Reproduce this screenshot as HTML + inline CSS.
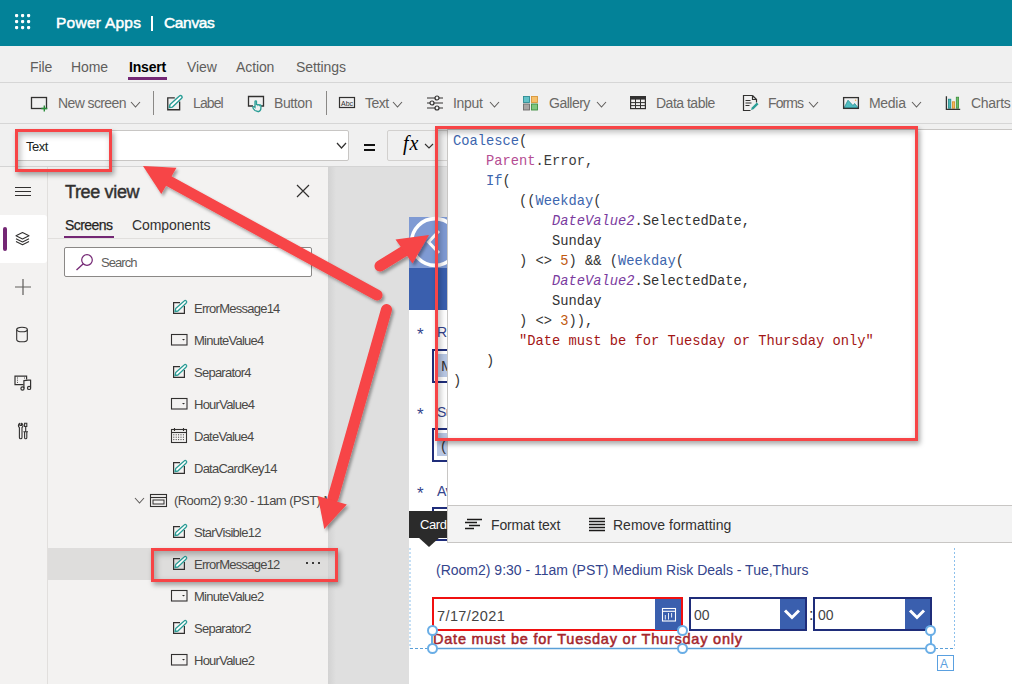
<!DOCTYPE html>
<html><head><meta charset="utf-8"><style>
html,body{margin:0;padding:0;width:1012px;height:684px;overflow:hidden;background:#f3f2f1;position:relative}
.t{position:absolute;white-space:pre;font-family:'Liberation Sans', sans-serif}
svg{overflow:visible}
</style></head><body>
<div style="position:absolute;left:0px;top:0px;width:1012px;height:46px;background:#038298"></div><div style="position:absolute;left:0px;top:46px;width:1012px;height:77px;background:#f0f0f0"></div><div style="position:absolute;left:0px;top:82px;width:1012px;height:1px;background:#d6d6d6"></div><div style="position:absolute;left:0px;top:123px;width:1012px;height:1px;background:#d6d6d6"></div><div style="position:absolute;left:0px;top:124px;width:1012px;height:42px;background:#f0f0f0"></div><svg style="position:absolute;left:0px;top:0px;" width="40" height="40" viewBox="0 0 40 40"><rect x="15" y="14" width="3.2" height="3.2" rx="1.1" fill="#fff"/><rect x="15" y="20" width="3.2" height="3.2" rx="1.1" fill="#fff"/><rect x="15" y="26" width="3.2" height="3.2" rx="1.1" fill="#fff"/><rect x="21" y="14" width="3.2" height="3.2" rx="1.1" fill="#fff"/><rect x="21" y="20" width="3.2" height="3.2" rx="1.1" fill="#fff"/><rect x="21" y="26" width="3.2" height="3.2" rx="1.1" fill="#fff"/><rect x="27" y="14" width="3.2" height="3.2" rx="1.1" fill="#fff"/><rect x="27" y="20" width="3.2" height="3.2" rx="1.1" fill="#fff"/><rect x="27" y="26" width="3.2" height="3.2" rx="1.1" fill="#fff"/></svg><div class="t" style="left:56px;top:14.88px;font-size:15.5px;line-height:15.5px;color:#fff;font-weight:400;font-family:'Liberation Sans', sans-serif;letter-spacing:0.25px;-webkit-text-stroke:0.5px #fff">Power Apps</div><div style="position:absolute;left:151px;top:16px;width:2px;height:15px;background:#fff"></div><div class="t" style="left:164px;top:14.88px;font-size:15.5px;line-height:15.5px;color:#fff;font-weight:400;font-family:'Liberation Sans', sans-serif;letter-spacing:-0.35px;-webkit-text-stroke:0.5px #fff">Canvas</div><div class="t" style="left:30px;top:60.15px;font-size:14px;line-height:14px;color:#605e5c;font-weight:400;font-family:'Liberation Sans', sans-serif;letter-spacing:-0.1px;">File</div><div class="t" style="left:71px;top:60.15px;font-size:14px;line-height:14px;color:#605e5c;font-weight:400;font-family:'Liberation Sans', sans-serif;letter-spacing:-0.1px;">Home</div><div class="t" style="left:129px;top:60.15px;font-size:14px;line-height:14px;color:#000;font-weight:700;font-family:'Liberation Sans', sans-serif;letter-spacing:-0.2px;">Insert</div><div class="t" style="left:187px;top:60.15px;font-size:14px;line-height:14px;color:#605e5c;font-weight:400;font-family:'Liberation Sans', sans-serif;letter-spacing:-0.1px;">View</div><div class="t" style="left:236px;top:60.15px;font-size:14px;line-height:14px;color:#605e5c;font-weight:400;font-family:'Liberation Sans', sans-serif;letter-spacing:-0.1px;">Action</div><div class="t" style="left:296px;top:60.15px;font-size:14px;line-height:14px;color:#605e5c;font-weight:400;font-family:'Liberation Sans', sans-serif;letter-spacing:-0.1px;">Settings</div><div style="position:absolute;left:128px;top:77px;width:39px;height:3px;background:#742774"></div><svg style="position:absolute;left:30px;top:96px;" width="20" height="16" viewBox="0 0 20 16"><rect x="1.5" y="1.5" width="15" height="11" fill="none" stroke="#323130" stroke-width="1.3"/><path d="M14.3 9.5v6M11.3 12.5h6" stroke="#2a8f3a" stroke-width="1.4"/></svg><div class="t" style="left:58px;top:95.65px;font-size:14px;line-height:14px;color:#6a6866;font-weight:400;font-family:'Liberation Sans', sans-serif;letter-spacing:-0.6px;">New screen</div><svg style="position:absolute;left:130px;top:101px;" width="11" height="7" viewBox="0 0 11 7"><polyline points="1,1 5.5,6 10,1" fill="none" stroke="#605e5c" stroke-width="1.1"/></svg><div style="position:absolute;left:153px;top:91px;width:1px;height:24px;background:#8a8886"></div><svg style="position:absolute;left:166px;top:94.5px;" width="18" height="18" viewBox="0 0 18 18"><g transform="scale(1.1)"><path d="M8 2.6H1.6V13.4H12.4V6" fill="none" stroke="#323130" stroke-width="1.2"/><path d="M3 11.5L3.7 8.6L12.2 0.9A1.2 1.2 0 0 1 14.2 3L5.9 11Z" fill="#fff" stroke="#2a9d96" stroke-width="1.3" stroke-linejoin="round"/></g></svg><div class="t" style="left:193px;top:95.65px;font-size:14px;line-height:14px;color:#6a6866;font-weight:400;font-family:'Liberation Sans', sans-serif;letter-spacing:-0.9px;">Label</div><svg style="position:absolute;left:247px;top:95px;" width="20" height="18" viewBox="0 0 20 18"><path d="M6 11H1.5V1.5h15V11H14" fill="none" stroke="#323130" stroke-width="1.3"/><path d="M8 15.5c-1.5-1.2-2.5-2.5-2-3.5.5-.7 1.4-.3 2 .3V6.5c0-.8 1.5-.8 1.5 0V10c.3-.6 1.3-.6 1.5 0 .3-.5 1.3-.5 1.5.2.3-.4 1.4-.3 1.4.5v2.5c0 1.5-1 3-2.5 3.5z" fill="none" stroke="#2a9d96" stroke-width="1.3"/></svg><div class="t" style="left:274px;top:95.65px;font-size:14px;line-height:14px;color:#6a6866;font-weight:400;font-family:'Liberation Sans', sans-serif;letter-spacing:-0.4px;">Button</div><div style="position:absolute;left:326px;top:91px;width:1px;height:24px;background:#8a8886"></div><svg style="position:absolute;left:338px;top:96px;" width="18" height="14" viewBox="0 0 18 14"><rect x="1.5" y="1.5" width="15" height="10" fill="none" stroke="#323130" stroke-width="1.2"/><text x="9" y="9.5" font-size="7" font-family="Liberation Sans" text-anchor="middle" fill="#323130">Abc</text></svg><div class="t" style="left:365px;top:95.65px;font-size:14px;line-height:14px;color:#6a6866;font-weight:400;font-family:'Liberation Sans', sans-serif;letter-spacing:-0.5px;">Text</div><svg style="position:absolute;left:392px;top:101px;" width="11" height="7" viewBox="0 0 11 7"><polyline points="1,1 5.5,6 10,1" fill="none" stroke="#605e5c" stroke-width="1.1"/></svg><svg style="position:absolute;left:426px;top:95px;" width="18" height="16" viewBox="0 0 18 16"><path d="M1 3h16M1 8h16M1 13h16" stroke="#323130" stroke-width="1.2"/><circle cx="11" cy="3" r="2" fill="#f0f0f0" stroke="#323130" stroke-width="1.2"/><circle cx="6" cy="8" r="2" fill="#f0f0f0" stroke="#323130" stroke-width="1.2"/><circle cx="11" cy="13" r="2" fill="#f0f0f0" stroke="#323130" stroke-width="1.2"/></svg><div class="t" style="left:453px;top:95.65px;font-size:14px;line-height:14px;color:#6a6866;font-weight:400;font-family:'Liberation Sans', sans-serif;letter-spacing:-0.3px;">Input</div><svg style="position:absolute;left:489px;top:101px;" width="11" height="7" viewBox="0 0 11 7"><polyline points="1,1 5.5,6 10,1" fill="none" stroke="#605e5c" stroke-width="1.1"/></svg><svg style="position:absolute;left:522px;top:95px;" width="18" height="16" viewBox="0 0 18 16"><rect x="1.5" y="1.5" width="6" height="6" fill="#62c2c8" stroke="#2f8c92" stroke-width="0.9"/><rect x="9.5" y="1.5" width="6" height="6" fill="#f7c06a" stroke="#d8953a" stroke-width="0.9"/><rect x="1.5" y="9" width="6" height="6" fill="#a8a6a4" stroke="#6e6c6a" stroke-width="0.9"/><rect x="9.5" y="9" width="6" height="6" fill="#80c67e" stroke="#3f8f3f" stroke-width="0.9"/></svg><div class="t" style="left:549px;top:95.65px;font-size:14px;line-height:14px;color:#6a6866;font-weight:400;font-family:'Liberation Sans', sans-serif;letter-spacing:-0.5px;">Gallery</div><svg style="position:absolute;left:596px;top:101px;" width="11" height="7" viewBox="0 0 11 7"><polyline points="1,1 5.5,6 10,1" fill="none" stroke="#605e5c" stroke-width="1.1"/></svg><svg style="position:absolute;left:629px;top:95px;" width="18" height="16" viewBox="0 0 18 16"><rect x="1.6" y="1.6" width="14.8" height="12" fill="none" stroke="#323130" stroke-width="1.2"/><rect x="1" y="1" width="16" height="3.6" fill="#323130"/><path d="M1.5 7.6h15M1.5 10.6h15M6.5 4v9.5M11.5 4v9.5" stroke="#323130" stroke-width="1"/></svg><div class="t" style="left:656px;top:95.65px;font-size:14px;line-height:14px;color:#6a6866;font-weight:400;font-family:'Liberation Sans', sans-serif;letter-spacing:-0.5px;">Data table</div><svg style="position:absolute;left:741px;top:94px;" width="18" height="18" viewBox="0 0 18 18"><path d="M11.5 1.5H2.5v15h7M11.5 1.5v4h4v3M11.5 1.5l4 4" fill="none" stroke="#323130" stroke-width="1.2"/><path d="M4.5 6.5h5M4.5 9h6M4.5 11.5h4" stroke="#323130" stroke-width="1"/><path d="M10 16l.8-2.5 5-5 1.7 1.7-5 5z" fill="#2a9d96"/></svg><div class="t" style="left:768px;top:95.65px;font-size:14px;line-height:14px;color:#6a6866;font-weight:400;font-family:'Liberation Sans', sans-serif;letter-spacing:-0.9px;">Forms</div><svg style="position:absolute;left:808px;top:101px;" width="11" height="7" viewBox="0 0 11 7"><polyline points="1,1 5.5,6 10,1" fill="none" stroke="#605e5c" stroke-width="1.1"/></svg><svg style="position:absolute;left:842px;top:96px;" width="19" height="14" viewBox="0 0 19 14"><path d="M2 12L6 4.2L11 9.6L12.6 7.5L16.3 12Z" fill="#4fbcc0" stroke="#2a8d92" stroke-width="0.8"/><rect x="1.6" y="1.6" width="14.8" height="10.8" fill="none" stroke="#323130" stroke-width="1.3"/><circle cx="13.6" cy="4.3" r="0.7" fill="#f2a93b"/></svg><div class="t" style="left:869px;top:95.65px;font-size:14px;line-height:14px;color:#6a6866;font-weight:400;font-family:'Liberation Sans', sans-serif;letter-spacing:-0.3px;">Media</div><svg style="position:absolute;left:911px;top:101px;" width="11" height="7" viewBox="0 0 11 7"><polyline points="1,1 5.5,6 10,1" fill="none" stroke="#605e5c" stroke-width="1.1"/></svg><svg style="position:absolute;left:945px;top:95px;" width="17" height="16" viewBox="0 0 17 16"><rect x="3.5" y="4.2" width="2.3" height="9" fill="#4bb5b5" stroke="#1d8a8a" stroke-width="0.8"/><rect x="7.4" y="6.8" width="2.2" height="6.4" fill="#f5b95c" stroke="#d58d2b" stroke-width="0.8"/><rect x="11.3" y="2.2" width="2.3" height="11" fill="#6cbf68" stroke="#3c8f3c" stroke-width="0.8"/><path d="M1.4 1.3V14.3H15.2" fill="none" stroke="#323130" stroke-width="1.3"/></svg><div class="t" style="left:971px;top:95.65px;font-size:14px;line-height:14px;color:#6a6866;font-weight:400;font-family:'Liberation Sans', sans-serif;letter-spacing:-0.3px;">Charts</div><div style="position:absolute;left:16px;top:130px;width:333px;height:31px;background:#fff;border:1px solid #c8c6c4;box-sizing:border-box;border-radius:2px"></div><div class="t" style="left:26px;top:140.00px;font-size:13px;line-height:13px;color:#201f1e;font-weight:400;font-family:'Liberation Sans', sans-serif;letter-spacing:-0.5px;">Text</div><svg style="position:absolute;left:336px;top:142px;" width="11" height="7" viewBox="0 0 11 7"><polyline points="1,1 5.5,6 10,1" fill="none" stroke="#323130" stroke-width="1.2"/></svg><div style="position:absolute;left:364px;top:144px;width:11px;height:1.6px;background:#111"></div><div style="position:absolute;left:364px;top:149px;width:11px;height:1.6px;background:#111"></div><div style="position:absolute;left:387px;top:130px;width:70px;height:31px;background:#f0f0f0;border:1px solid #d2d0ce;box-sizing:border-box;border-radius:2px"></div><div class="t" style="left:403px;top:133.17px;font-size:20px;line-height:20px;color:#000;font-weight:400;font-family:'Liberation Serif', serif;letter-spacing:1px;font-style:italic">fx</div><svg style="position:absolute;left:424px;top:143px;" width="10" height="6" viewBox="0 0 10 6"><polyline points="1,1 5.0,5 9,1" fill="none" stroke="#323130" stroke-width="1.1"/></svg><div style="position:absolute;left:0px;top:166px;width:47px;height:518px;background:#f3f2f1"></div><div style="position:absolute;left:47px;top:166px;width:1px;height:518px;background:#e1dfdd"></div><div style="position:absolute;left:15px;top:187px;width:16px;height:1.2px;background:#323130"></div><div style="position:absolute;left:15px;top:191px;width:16px;height:1.2px;background:#323130"></div><div style="position:absolute;left:15px;top:195px;width:16px;height:1.2px;background:#323130"></div><div style="position:absolute;left:0px;top:215px;width:47px;height:48px;background:#fff;border-radius:0 3px 3px 0"></div><div style="position:absolute;left:3px;top:227px;width:4px;height:24px;background:#742774;border-radius:2px"></div><svg style="position:absolute;left:14px;top:231px;" width="18" height="16" viewBox="0 0 18 16"><path d="M8.5 1.5l6.5 3.2-6.5 3.2-6.5-3.2z M2 7.8l6.5 3.2 6.5-3.2 M2 10.6l6.5 3.2 6.5-3.2" fill="none" stroke="#323130" stroke-width="1.1" stroke-linejoin="round"/></svg><svg style="position:absolute;left:14px;top:278px;" width="18" height="18" viewBox="0 0 18 18"><path d="M9 1v16M1 9h16" stroke="#605e5c" stroke-width="1.2"/></svg><svg style="position:absolute;left:15px;top:326px;" width="14" height="17" viewBox="0 0 14 17"><ellipse cx="7" cy="3.5" rx="5.3" ry="2.3" fill="none" stroke="#323130" stroke-width="1.1"/><path d="M1.7 3.5v10c0 1.3 2.4 2.3 5.3 2.3s5.3-1 5.3-2.3v-10" fill="none" stroke="#323130" stroke-width="1.1"/></svg><svg style="position:absolute;left:13px;top:374px;" width="20" height="18" viewBox="0 0 20 18"><path d="M10.5 10.7H2V2.1H13.6V5.5" fill="none" stroke="#323130" stroke-width="1.2"/><path d="M4.5 3.5v6M11.5 3.5v2" stroke="#323130" stroke-width="0.9" stroke-dasharray="1 1.2"/><path d="M10.9 14.2V6.6Q14 5.8 17.6 6.2V13.6" fill="none" stroke="#323130" stroke-width="1.2"/><circle cx="9.5" cy="14.5" r="1.6" fill="none" stroke="#323130" stroke-width="1.2"/><circle cx="16.1" cy="13.9" r="1.6" fill="none" stroke="#323130" stroke-width="1.2"/></svg><svg style="position:absolute;left:16px;top:421px;" width="14" height="19" viewBox="0 0 14 19"><path d="M3.4 6.5V16.4A1.3 1.3 0 0 0 6 16.4V6.5A2.3 2.3 0 0 0 7 4.5A2.5 2.5 0 0 0 5.5 2.3V4.5H3.9V2.3A2.5 2.5 0 0 0 2.4 4.5A2.3 2.3 0 0 0 3.4 6.5Z" fill="none" stroke="#323130" stroke-width="1.1" stroke-linejoin="round"/><path d="M8.6 2.3h2.2v3.2h-2.2z M9.7 5.5v5.2 M7.4 10.7h4.6 M8.6 10.7v6A1.1 1.1 0 0 0 10.8 16.7v-6" fill="none" stroke="#323130" stroke-width="1.1"/></svg><div style="position:absolute;left:48px;top:166px;width:280px;height:518px;background:#f3f2f1"></div><div class="t" style="left:65px;top:182.76px;font-size:18px;line-height:18px;color:#323130;font-weight:400;font-family:'Liberation Sans', sans-serif;letter-spacing:-0.35px;-webkit-text-stroke:0.45px #323130">Tree view</div><svg style="position:absolute;left:296px;top:184px;" width="14" height="14" viewBox="0 0 14 14"><path d="M1 1l12 12M13 1L1 13" stroke="#323130" stroke-width="1.2"/></svg><div class="t" style="left:65px;top:218.15px;font-size:14px;line-height:14px;color:#252423;font-weight:400;font-family:'Liberation Sans', sans-serif;letter-spacing:-0.55px;-webkit-text-stroke:0.25px #252423">Screens</div><div class="t" style="left:132px;top:218.15px;font-size:14px;line-height:14px;color:#323130;font-weight:400;font-family:'Liberation Sans', sans-serif;letter-spacing:-0.1px;">Components</div><div style="position:absolute;left:64px;top:236px;width:50px;height:2px;background:#742774"></div><div style="position:absolute;left:48px;top:238px;width:280px;height:1px;background:#e1dfdd"></div><div style="position:absolute;left:64px;top:247px;width:248px;height:30px;background:#fff;border:1px solid #8a8886;box-sizing:border-box;border-radius:2px"></div><svg style="position:absolute;left:75px;top:253px;" width="20" height="18" viewBox="0 0 20 18"><circle cx="12" cy="7" r="5.3" fill="none" stroke="#742774" stroke-width="1.2"/><path d="M8.3 10.7L1.5 17" stroke="#742774" stroke-width="1.3"/></svg><div class="t" style="left:101px;top:256.00px;font-size:13px;line-height:13px;color:#605e5c;font-weight:400;font-family:'Liberation Sans', sans-serif;letter-spacing:-0.95px;">Search</div><div style="position:absolute;left:48px;top:548px;width:280px;height:32px;background:#dedddc"></div><svg style="position:absolute;left:172px;top:299.5px;" width="16" height="16" viewBox="0 0 16 16"><path d="M8 2.6H1.6V13.4H12.4V6" fill="none" stroke="#323130" stroke-width="1.2"/><path d="M3 11.5L3.7 8.6L12.2 0.9A1.2 1.2 0 0 1 14.2 3L5.9 11Z" fill="#fff" stroke="#2a9d96" stroke-width="1.3" stroke-linejoin="round"/></svg><div class="t" style="left:194px;top:302.00px;font-size:13px;line-height:13px;color:#4a4947;font-weight:400;font-family:'Liberation Sans', sans-serif;letter-spacing:-0.75px;">ErrorMessage14</div><svg style="position:absolute;left:171px;top:334px;" width="18" height="13" viewBox="0 0 18 13"><rect x="0.5" y="0.5" width="15.5" height="10.5" fill="none" stroke="#323130" stroke-width="1.1"/><path d="M11 5h3l-1.5 1.6z" fill="#323130"/></svg><div class="t" style="left:194px;top:334.00px;font-size:13px;line-height:13px;color:#4a4947;font-weight:400;font-family:'Liberation Sans', sans-serif;letter-spacing:-0.75px;">MinuteValue4</div><svg style="position:absolute;left:172px;top:363.5px;" width="16" height="16" viewBox="0 0 16 16"><path d="M8 2.6H1.6V13.4H12.4V6" fill="none" stroke="#323130" stroke-width="1.2"/><path d="M3 11.5L3.7 8.6L12.2 0.9A1.2 1.2 0 0 1 14.2 3L5.9 11Z" fill="#fff" stroke="#2a9d96" stroke-width="1.3" stroke-linejoin="round"/></svg><div class="t" style="left:194px;top:366.00px;font-size:13px;line-height:13px;color:#4a4947;font-weight:400;font-family:'Liberation Sans', sans-serif;letter-spacing:-0.75px;">Separator4</div><svg style="position:absolute;left:171px;top:398px;" width="18" height="13" viewBox="0 0 18 13"><rect x="0.5" y="0.5" width="15.5" height="10.5" fill="none" stroke="#323130" stroke-width="1.1"/><path d="M11 5h3l-1.5 1.6z" fill="#323130"/></svg><div class="t" style="left:194px;top:398.00px;font-size:13px;line-height:13px;color:#4a4947;font-weight:400;font-family:'Liberation Sans', sans-serif;letter-spacing:-0.75px;">HourValue4</div><svg style="position:absolute;left:171px;top:428px;" width="17" height="16" viewBox="0 0 17 16"><rect x="0.5" y="1.5" width="15" height="13" fill="none" stroke="#323130" stroke-width="1.1"/><path d="M0.5 4.5h15" stroke="#323130" stroke-width="1.1"/><path d="M3.5 0v3M12.5 0v3" stroke="#323130" stroke-width="1.1"/><rect x="2.3" y="6.3" width="1" height="1" fill="#323130"/><rect x="2.3" y="8.7" width="1" height="1" fill="#323130"/><rect x="2.3" y="11.1" width="1" height="1" fill="#323130"/><rect x="4.7" y="6.3" width="1" height="1" fill="#323130"/><rect x="4.7" y="8.7" width="1" height="1" fill="#323130"/><rect x="4.7" y="11.1" width="1" height="1" fill="#323130"/><rect x="7.1" y="6.3" width="1" height="1" fill="#323130"/><rect x="7.1" y="8.7" width="1" height="1" fill="#323130"/><rect x="7.1" y="11.1" width="1" height="1" fill="#323130"/><rect x="9.5" y="6.3" width="1" height="1" fill="#323130"/><rect x="9.5" y="8.7" width="1" height="1" fill="#323130"/><rect x="9.5" y="11.1" width="1" height="1" fill="#323130"/><rect x="11.9" y="6.3" width="1" height="1" fill="#323130"/><rect x="11.9" y="8.7" width="1" height="1" fill="#323130"/><rect x="11.9" y="11.1" width="1" height="1" fill="#323130"/></svg><div class="t" style="left:194px;top:430.00px;font-size:13px;line-height:13px;color:#4a4947;font-weight:400;font-family:'Liberation Sans', sans-serif;letter-spacing:-0.75px;">DateValue4</div><svg style="position:absolute;left:172px;top:459.5px;" width="16" height="16" viewBox="0 0 16 16"><path d="M8 2.6H1.6V13.4H12.4V6" fill="none" stroke="#323130" stroke-width="1.2"/><path d="M3 11.5L3.7 8.6L12.2 0.9A1.2 1.2 0 0 1 14.2 3L5.9 11Z" fill="#fff" stroke="#2a9d96" stroke-width="1.3" stroke-linejoin="round"/></svg><div class="t" style="left:194px;top:462.00px;font-size:13px;line-height:13px;color:#4a4947;font-weight:400;font-family:'Liberation Sans', sans-serif;letter-spacing:-0.75px;">DataCardKey14</div><svg style="position:absolute;left:172px;top:523.5px;" width="16" height="16" viewBox="0 0 16 16"><path d="M8 2.6H1.6V13.4H12.4V6" fill="none" stroke="#323130" stroke-width="1.2"/><path d="M3 11.5L3.7 8.6L12.2 0.9A1.2 1.2 0 0 1 14.2 3L5.9 11Z" fill="#fff" stroke="#2a9d96" stroke-width="1.3" stroke-linejoin="round"/></svg><div class="t" style="left:194px;top:526.00px;font-size:13px;line-height:13px;color:#4a4947;font-weight:400;font-family:'Liberation Sans', sans-serif;letter-spacing:-0.75px;">StarVisible12</div><svg style="position:absolute;left:172px;top:555.5px;" width="16" height="16" viewBox="0 0 16 16"><path d="M8 2.6H1.6V13.4H12.4V6" fill="none" stroke="#323130" stroke-width="1.2"/><path d="M3 11.5L3.7 8.6L12.2 0.9A1.2 1.2 0 0 1 14.2 3L5.9 11Z" fill="#fff" stroke="#2a9d96" stroke-width="1.3" stroke-linejoin="round"/></svg><div class="t" style="left:194px;top:558.00px;font-size:13px;line-height:13px;color:#4a4947;font-weight:400;font-family:'Liberation Sans', sans-serif;letter-spacing:-0.75px;">ErrorMessage12</div><svg style="position:absolute;left:171px;top:590px;" width="18" height="13" viewBox="0 0 18 13"><rect x="0.5" y="0.5" width="15.5" height="10.5" fill="none" stroke="#323130" stroke-width="1.1"/><path d="M11 5h3l-1.5 1.6z" fill="#323130"/></svg><div class="t" style="left:194px;top:590.00px;font-size:13px;line-height:13px;color:#4a4947;font-weight:400;font-family:'Liberation Sans', sans-serif;letter-spacing:-0.75px;">MinuteValue2</div><svg style="position:absolute;left:172px;top:619.5px;" width="16" height="16" viewBox="0 0 16 16"><path d="M8 2.6H1.6V13.4H12.4V6" fill="none" stroke="#323130" stroke-width="1.2"/><path d="M3 11.5L3.7 8.6L12.2 0.9A1.2 1.2 0 0 1 14.2 3L5.9 11Z" fill="#fff" stroke="#2a9d96" stroke-width="1.3" stroke-linejoin="round"/></svg><div class="t" style="left:194px;top:622.00px;font-size:13px;line-height:13px;color:#4a4947;font-weight:400;font-family:'Liberation Sans', sans-serif;letter-spacing:-0.75px;">Separator2</div><svg style="position:absolute;left:171px;top:654px;" width="18" height="13" viewBox="0 0 18 13"><rect x="0.5" y="0.5" width="15.5" height="10.5" fill="none" stroke="#323130" stroke-width="1.1"/><path d="M11 5h3l-1.5 1.6z" fill="#323130"/></svg><div class="t" style="left:194px;top:654.00px;font-size:13px;line-height:13px;color:#4a4947;font-weight:400;font-family:'Liberation Sans', sans-serif;letter-spacing:-0.75px;">HourValue2</div><svg style="position:absolute;left:134px;top:497px;" width="11" height="7" viewBox="0 0 11 7"><polyline points="1,1 5.5,6 10,1" fill="none" stroke="#605e5c" stroke-width="1.1"/></svg><svg style="position:absolute;left:150px;top:494px;" width="18" height="14" viewBox="0 0 18 14"><rect x="0.5" y="0.5" width="16" height="12" fill="none" stroke="#323130" stroke-width="1.1"/><path d="M0.5 3.5h16" stroke="#323130" stroke-width="1.1"/><rect x="3" y="6" width="11" height="4" fill="none" stroke="#323130" stroke-width="1"/></svg><div class="t" style="left:174px;top:494.00px;font-size:13px;line-height:13px;color:#4a4947;font-weight:400;font-family:'Liberation Sans', sans-serif;letter-spacing:-0.55px;">(Room2) 9:30 - 11am (PST) M</div><div style="position:absolute;left:306px;top:562px;width:2px;height:2px;background:#3b3a39"></div><div style="position:absolute;left:312px;top:562px;width:2px;height:2px;background:#3b3a39"></div><div style="position:absolute;left:318px;top:562px;width:2px;height:2px;background:#3b3a39"></div><div style="position:absolute;left:328px;top:166px;width:684px;height:518px;background:#dfdfdf"></div><div style="position:absolute;left:328px;top:166px;width:8px;height:518px;background:linear-gradient(to right,#d2d2d2,#dfdfdf)"></div><div style="position:absolute;left:409px;top:217px;width:603px;height:467px;background:#fff"></div><div style="position:absolute;left:409px;top:217px;width:603px;height:51px;background:#7f9ad3"></div><div style="position:absolute;left:409px;top:268px;width:603px;height:42px;background:#3a5fae"></div><svg style="position:absolute;left:408px;top:215px;" width="54" height="56" viewBox="0 0 54 56"><circle cx="27" cy="27" r="23.4" fill="none" stroke="#fff" stroke-width="3.6"/><polyline points="31,16 20.5,27 31,38" fill="none" stroke="#fff" stroke-width="3"/></svg><div class="t" style="left:417px;top:325.61px;font-size:17px;line-height:17px;color:#34448c;font-weight:400;font-family:'Liberation Sans', sans-serif;letter-spacing:0px;">*</div><div class="t" style="left:437px;top:325.15px;font-size:14px;line-height:14px;color:#34448c;font-weight:400;font-family:'Liberation Sans', sans-serif;letter-spacing:-0.6px;">Ri</div><div style="position:absolute;left:432px;top:349px;width:40px;height:34px;border:2px solid #1f2d7a;box-sizing:border-box;background:#fff"></div><div style="position:absolute;left:437px;top:354px;width:30px;height:23px;background:#b8c7e4"></div><div class="t" style="left:417px;top:405.61px;font-size:17px;line-height:17px;color:#34448c;font-weight:400;font-family:'Liberation Sans', sans-serif;letter-spacing:0px;">*</div><div class="t" style="left:437px;top:405.15px;font-size:14px;line-height:14px;color:#34448c;font-weight:400;font-family:'Liberation Sans', sans-serif;letter-spacing:-0.6px;">Su</div><div style="position:absolute;left:432px;top:428px;width:40px;height:34px;border:2px solid #1f2d7a;box-sizing:border-box;background:#fff"></div><div style="position:absolute;left:437px;top:433px;width:30px;height:23px;background:#b8c7e4"></div><div class="t" style="left:417px;top:484.61px;font-size:17px;line-height:17px;color:#34448c;font-weight:400;font-family:'Liberation Sans', sans-serif;letter-spacing:0px;">*</div><div class="t" style="left:437px;top:484.15px;font-size:14px;line-height:14px;color:#34448c;font-weight:400;font-family:'Liberation Sans', sans-serif;letter-spacing:-0.6px;">Av</div><div style="position:absolute;left:432px;top:507px;width:40px;height:34px;border:2px solid #1f2d7a;box-sizing:border-box;background:#fff"></div><div style="position:absolute;left:437px;top:512px;width:30px;height:23px;background:#b8c7e4"></div><div class="t" style="left:441px;top:358.30px;font-size:15px;line-height:15px;color:#333;font-weight:400;font-family:'Liberation Sans', sans-serif;letter-spacing:0px;">M</div><div class="t" style="left:441px;top:438.30px;font-size:15px;line-height:15px;color:#333;font-weight:400;font-family:'Liberation Sans', sans-serif;letter-spacing:0px;">(</div><div style="position:absolute;left:409px;top:511px;width:40px;height:27px;background:#2b2b2b"></div><svg style="position:absolute;left:418px;top:537px;" width="22" height="10" viewBox="0 0 22 10"><path d="M0 0h22L11 10z" fill="#2b2b2b"/></svg><div class="t" style="left:420px;top:518.00px;font-size:13px;line-height:13px;color:#fff;font-weight:400;font-family:'Liberation Sans', sans-serif;letter-spacing:-0.4px;">Card</div><div style="position:absolute;left:0px;top:166px;width:447px;height:1px;background:#d4d4d4"></div><div style="position:absolute;left:447px;top:129px;width:565px;height:376px;background:#fff;border-left:1px solid #c8c6c4;border-top:1px solid #c8c6c4;box-sizing:border-box"></div><div class="t" style="left:453px;top:135.46px;font-size:13.75px;line-height:13.75px;color:#3c3c3c;font-weight:400;font-family:'Liberation Mono', monospace;letter-spacing:0px;"><span style="color:#3d66ae">Coalesce</span><span style="color:#333">(</span></div><div class="t" style="left:486px;top:155.46px;font-size:13.75px;line-height:13.75px;color:#3c3c3c;font-weight:400;font-family:'Liberation Mono', monospace;letter-spacing:0px;"><span style="color:#b54d93">Parent</span><span style="color:#3c3c3c">.Error,</span></div><div class="t" style="left:486px;top:175.46px;font-size:13.75px;line-height:13.75px;color:#3c3c3c;font-weight:400;font-family:'Liberation Mono', monospace;letter-spacing:0px;"><span style="color:#3d66ae">If</span><span style="color:#333">(</span></div><div class="t" style="left:519px;top:195.46px;font-size:13.75px;line-height:13.75px;color:#3c3c3c;font-weight:400;font-family:'Liberation Mono', monospace;letter-spacing:0px;"><span style="color:#333">((</span><span style="color:#3d66ae">Weekday</span><span style="color:#333">(</span></div><div class="t" style="left:552px;top:215.46px;font-size:13.75px;line-height:13.75px;color:#3c3c3c;font-weight:400;font-family:'Liberation Mono', monospace;letter-spacing:0px;"><span style="color:#7a3a9e"><i>DateValue2</i></span><span style="color:#333">.SelectedDate,</span></div><div class="t" style="left:552px;top:235.46px;font-size:13.75px;line-height:13.75px;color:#3c3c3c;font-weight:400;font-family:'Liberation Mono', monospace;letter-spacing:0px;"><span style="color:#333">Sunday</span></div><div class="t" style="left:519px;top:255.46px;font-size:13.75px;line-height:13.75px;color:#3c3c3c;font-weight:400;font-family:'Liberation Mono', monospace;letter-spacing:0px;"><span style="color:#333">) &lt;&gt; </span><span style="color:#c0580e">5</span><span style="color:#333">) &amp;&amp; (</span><span style="color:#3d66ae">Weekday</span><span style="color:#333">(</span></div><div class="t" style="left:552px;top:275.46px;font-size:13.75px;line-height:13.75px;color:#3c3c3c;font-weight:400;font-family:'Liberation Mono', monospace;letter-spacing:0px;"><span style="color:#7a3a9e"><i>DateValue2</i></span><span style="color:#333">.SelectedDate,</span></div><div class="t" style="left:552px;top:295.46px;font-size:13.75px;line-height:13.75px;color:#3c3c3c;font-weight:400;font-family:'Liberation Mono', monospace;letter-spacing:0px;"><span style="color:#333">Sunday</span></div><div class="t" style="left:519px;top:315.46px;font-size:13.75px;line-height:13.75px;color:#3c3c3c;font-weight:400;font-family:'Liberation Mono', monospace;letter-spacing:0px;"><span style="color:#333">) &lt;&gt; </span><span style="color:#c0580e">3</span><span style="color:#333">)),</span></div><div class="t" style="left:519px;top:335.46px;font-size:13.75px;line-height:13.75px;color:#3c3c3c;font-weight:400;font-family:'Liberation Mono', monospace;letter-spacing:0px;"><span style="color:#a31515">"Date must be for Tuesday or Thursday only"</span></div><div class="t" style="left:486px;top:355.46px;font-size:13.75px;line-height:13.75px;color:#3c3c3c;font-weight:400;font-family:'Liberation Mono', monospace;letter-spacing:0px;"><span style="color:#333">)</span></div><div class="t" style="left:453px;top:375.46px;font-size:13.75px;line-height:13.75px;color:#3c3c3c;font-weight:400;font-family:'Liberation Mono', monospace;letter-spacing:0px;"><span style="color:#333">)</span></div><div style="position:absolute;left:447px;top:505px;width:565px;height:38px;background:#f3f3f3;border-top:1px solid #c8c6c4;border-bottom:1px solid #c8c6c4;border-left:1px solid #c8c6c4;box-sizing:border-box"></div><svg style="position:absolute;left:464px;top:518px;" width="20" height="13" viewBox="0 0 20 13"><path d="M3 1.5h15M1 4.5h12M5 7.5h11M1 10.5h9" stroke="#1b1a19" stroke-width="1.3"/></svg><div class="t" style="left:491px;top:517.65px;font-size:14px;line-height:14px;color:#323130;font-weight:400;font-family:'Liberation Sans', sans-serif;letter-spacing:-0.15px;">Format text</div><svg style="position:absolute;left:588px;top:517px;" width="18" height="15" viewBox="0 0 18 15"><path d="M1 1.5h16M1 4.5h16M1 7.5h16M1 10.5h16M1 13.5h16" stroke="#1b1a19" stroke-width="1.3"/></svg><div class="t" style="left:613px;top:517.65px;font-size:14px;line-height:14px;color:#323130;font-weight:400;font-family:'Liberation Sans', sans-serif;letter-spacing:0px;">Remove formatting</div><svg style="position:absolute;left:0px;top:0px;pointer-events:none" width="1012" height="684" viewBox="0 0 1012 684"><path d="M410 548V648.5" stroke="#8cc0ec" stroke-width="1" stroke-dasharray="2 2" fill="none"/><path d="M954.5 548V648.5" stroke="#8cc0ec" stroke-width="1" stroke-dasharray="2 2" fill="none"/><path d="M410 648.5H955" stroke="#5a9fd8" stroke-width="1" stroke-dasharray="3 2" fill="none"/><path d="M432 648.5H930" stroke="#5a9fd8" stroke-width="1.6" fill="none"/></svg><div class="t" style="left:436px;top:563.15px;font-size:14px;line-height:14px;color:#34448c;font-weight:400;font-family:'Liberation Sans', sans-serif;letter-spacing:0px;">(Room2) 9:30 - 11am (PST) Medium Risk Deals - Tue,Thurs</div><div style="position:absolute;left:432px;top:597px;width:251px;height:34px;border:2px solid #f01010;box-sizing:border-box;background:#fff"></div><div style="position:absolute;left:655px;top:599px;width:26px;height:31px;background:#3a5fae"></div><svg style="position:absolute;left:661px;top:607px;" width="15" height="15" viewBox="0 0 15 15"><rect x="1.5" y="1.5" width="13" height="12.5" fill="none" stroke="#fff" stroke-width="1.1"/><path d="M1.5 4.3h13" stroke="#fff" stroke-width="1.1"/><path d="M4.3 8v4.5M7.5 6v6.5M10.6 6v4.5" stroke="#fff" stroke-width="0.9"/></svg><div class="t" style="left:437px;top:608.73px;font-size:14.5px;line-height:14.5px;color:#444;font-weight:400;font-family:'Liberation Sans', sans-serif;letter-spacing:0.4px;">7/17/2021</div><div class="t" style="left:433px;top:632.23px;font-size:14.5px;line-height:14.5px;color:#a4262c;font-weight:400;font-family:'Liberation Sans', sans-serif;letter-spacing:0.78px;-webkit-text-stroke:0.5px #a4262c">Date must be for Tuesday or Thursday only</div><div style="position:absolute;left:689px;top:597px;width:118px;height:34px;border:2px solid #1f2d7a;box-sizing:border-box;background:#fff"></div><div style="position:absolute;left:780px;top:599px;width:25px;height:30px;background:#3a5fae"></div><svg style="position:absolute;left:783px;top:607px;" width="18" height="14" viewBox="0 0 18 14"><polyline points="2,3.5 9,10.5 16,3.5" fill="none" stroke="#fff" stroke-width="3"/></svg><div class="t" style="left:694px;top:608.15px;font-size:14px;line-height:14px;color:#444;font-weight:400;font-family:'Liberation Sans', sans-serif;letter-spacing:0px;">00</div><div style="position:absolute;left:813px;top:597px;width:119px;height:34px;border:2px solid #1f2d7a;box-sizing:border-box;background:#fff"></div><div style="position:absolute;left:905px;top:599px;width:25px;height:30px;background:#3a5fae"></div><svg style="position:absolute;left:908px;top:607px;" width="18" height="14" viewBox="0 0 18 14"><polyline points="2,3.5 9,10.5 16,3.5" fill="none" stroke="#fff" stroke-width="3"/></svg><div class="t" style="left:818px;top:608.15px;font-size:14px;line-height:14px;color:#444;font-weight:400;font-family:'Liberation Sans', sans-serif;letter-spacing:0px;">00</div><div class="t" style="left:809px;top:607.46px;font-size:16px;line-height:16px;color:#333;font-weight:400;font-family:'Liberation Sans', sans-serif;letter-spacing:0px;">:</div><div style="position:absolute;left:929.5px;top:631px;width:2px;height:17px;background:#6aaee6"></div><div style="position:absolute;left:431px;top:631px;width:2px;height:17px;background:#6aaee6"></div><div style="position:absolute;left:426.5px;top:625.0px;width:11px;height:11px;background:#fff;border:2px solid #6aaee6;border-radius:50%;box-sizing:border-box"></div><div style="position:absolute;left:676.5px;top:625.0px;width:11px;height:11px;background:#fff;border:2px solid #6aaee6;border-radius:50%;box-sizing:border-box"></div><div style="position:absolute;left:426.5px;top:643.0px;width:11px;height:11px;background:#fff;border:2px solid #6aaee6;border-radius:50%;box-sizing:border-box"></div><div style="position:absolute;left:676.5px;top:643.0px;width:11px;height:11px;background:#fff;border:2px solid #6aaee6;border-radius:50%;box-sizing:border-box"></div><div style="position:absolute;left:925.0px;top:625.0px;width:11px;height:11px;background:#fff;border:2px solid #6aaee6;border-radius:50%;box-sizing:border-box"></div><div style="position:absolute;left:925.0px;top:643.0px;width:11px;height:11px;background:#fff;border:2px solid #6aaee6;border-radius:50%;box-sizing:border-box"></div><div style="position:absolute;left:937px;top:655px;width:17px;height:16px;border:1px solid #5aa0e0;box-sizing:border-box;background:#fff"></div><div class="t" style="left:940px;top:657.84px;font-size:12px;line-height:12px;color:#5aa0e0;font-weight:400;font-family:'Liberation Sans', sans-serif;letter-spacing:0px;">A</div><div style="position:absolute;left:15px;top:129px;width:97px;height:43px;border:3px solid #f74446;box-sizing:border-box;box-shadow:2px 3px 5px rgba(0,0,0,0.35), inset 2px 3px 6px rgba(0,0,0,0.28)"></div><div style="position:absolute;left:435px;top:126px;width:483px;height:315px;border:3.5px solid #f74446;box-sizing:border-box;box-shadow:2px 3px 5px rgba(0,0,0,0.35), inset 2px 3px 6px rgba(0,0,0,0.28)"></div><div style="position:absolute;left:151px;top:548px;width:187px;height:34px;border:3px solid #f74446;box-sizing:border-box;box-shadow:2px 3px 5px rgba(0,0,0,0.35), inset 2px 3px 6px rgba(0,0,0,0.28)"></div><svg style="position:absolute;left:0px;top:0px;pointer-events:none" width="1012" height="684" viewBox="0 0 1012 684">
<defs><filter id="sh" x="-20%" y="-20%" width="140%" height="140%"><feDropShadow dx="2" dy="2.5" stdDeviation="1.8" flood-color="#000" flood-opacity="0.35"/></filter></defs>
<g filter="url(#sh)" fill="#f74446" stroke="#f74446">
<line x1="377" y1="295" x2="166" y2="179.5" stroke-width="11" stroke-linecap="round"/>
<polygon points="143,166 176.5,167.8 161.3,194" stroke="none"/>
<line x1="380" y1="266" x2="406" y2="250" stroke-width="11" stroke-linecap="round"/>
<polygon points="429,235 395.5,239.5 412.6,263.5" stroke="none"/>
<line x1="386.5" y1="309.5" x2="333" y2="498" stroke-width="11" stroke-linecap="round"/>
<polygon points="324.3,529 317.8,496 346.8,504.6" stroke="none"/>
</g></svg>
</body></html>
